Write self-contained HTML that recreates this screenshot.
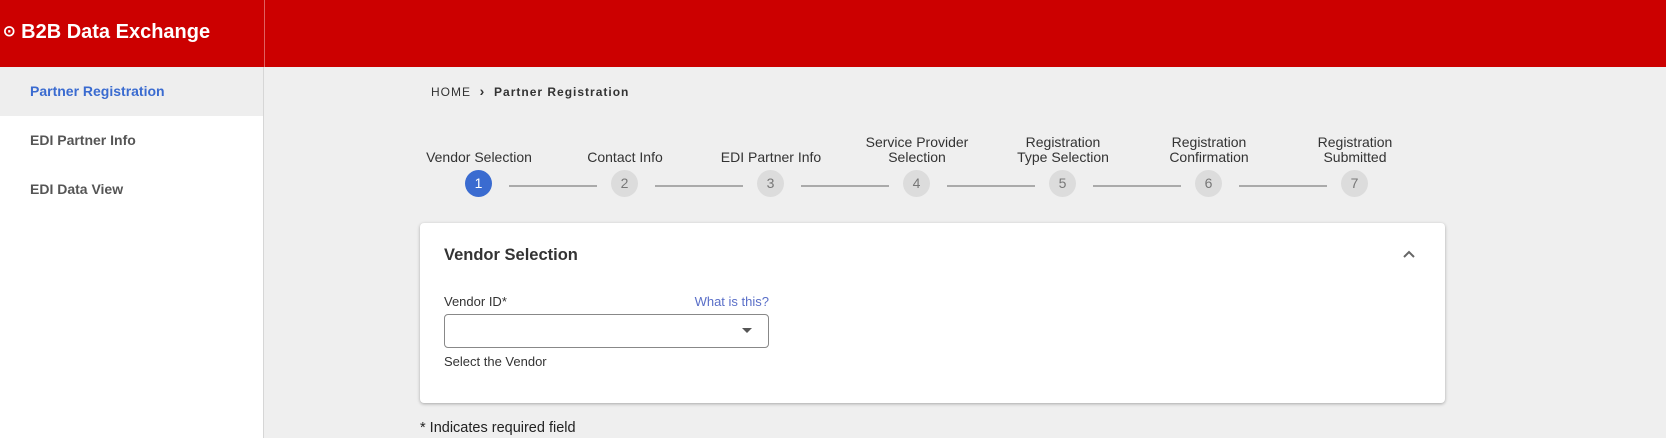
<!DOCTYPE html>
<html><head><meta charset="utf-8"><style>
*{margin:0;padding:0;box-sizing:border-box}
body{width:1666px;height:438px;overflow:hidden;background:#efefef;font-family:"Liberation Sans",Arial,sans-serif;position:relative}
.hdr{position:absolute;left:0;top:0;width:1666px;height:67px;background:#cc0000}
.hdr .sep{position:absolute;left:264px;top:0;width:1px;height:67px;background:#e06060}
.logo{position:absolute;left:3px;top:21px;color:#fff;font-weight:bold;font-size:20px;white-space:nowrap}
.side{position:absolute;left:0;top:67px;width:264px;height:371px;background:#fff;border-right:1px solid #d6d6d6}
.side .t{position:absolute;left:30px;font-size:14px;font-weight:bold;color:#555}
.act{position:absolute;left:0;top:0;width:263px;height:49px;background:#eeeeee}
.bc{position:absolute;left:431px;top:83px;font-size:12px;letter-spacing:1px;color:#333}
.lbl{position:absolute;width:160px;text-align:center;font-size:14px;line-height:15px;color:#333}
.c{position:absolute;width:27px;height:27px;border-radius:50%;background:#dcdcdc;color:#777;font-size:14px;text-align:center;line-height:27px}
.ln{position:absolute;height:2px;background:#aaa;top:185px;width:88px}
.card{position:absolute;left:420px;top:223px;width:1025px;height:180px;background:#fff;border-radius:4px;box-shadow:0 1px 3px rgba(0,0,0,.3)}
</style></head><body>
<div class="hdr"><div class="sep"></div><div class="logo"><span style="font-size:15px;position:relative;top:-2px">⊙</span> B2B Data Exchange</div></div>
<div class="side"><div class="act"></div>
<div class="t" style="top:16px;color:#3a6bd0">Partner Registration</div>
<div class="t" style="top:65px">EDI Partner Info</div>
<div class="t" style="top:114px">EDI Data View</div></div>
<div class="bc">HOME &nbsp;<b style="font-size:14px">›</b>&nbsp; <b>Partner Registration</b></div>

<div class="lbl" style="left:399px;top:150px">Vendor Selection</div>
<div class="lbl" style="left:545px;top:150px">Contact Info</div>
<div class="lbl" style="left:691px;top:150px">EDI Partner Info</div>
<div class="lbl" style="left:837px;top:135px">Service Provider<br>Selection</div>
<div class="lbl" style="left:983px;top:135px">Registration<br>Type Selection</div>
<div class="lbl" style="left:1129px;top:135px">Registration<br>Confirmation</div>
<div class="lbl" style="left:1275px;top:135px">Registration<br>Submitted</div>
<div class="c" style="left:465px;top:170px;background:#3a6bd0;color:#fff">1</div>
<div class="c" style="left:611px;top:170px">2</div>
<div class="c" style="left:757px;top:170px">3</div>
<div class="c" style="left:903px;top:170px">4</div>
<div class="c" style="left:1049px;top:170px">5</div>
<div class="c" style="left:1195px;top:170px">6</div>
<div class="c" style="left:1341px;top:170px">7</div>
<div class="ln" style="left:509px"></div><div class="ln" style="left:655px"></div><div class="ln" style="left:801px"></div>
<div class="ln" style="left:947px"></div><div class="ln" style="left:1093px"></div><div class="ln" style="left:1239px"></div>

<div class="card">
<div style="position:absolute;left:24px;top:23px;font-size:16.5px;font-weight:bold;color:#333">Vendor Selection</div>
<svg style="position:absolute;left:982px;top:26px" width="14" height="10"><path d="M2 8 L7 3 L12 8" stroke="#666" stroke-width="2" fill="none"/></svg>
<div style="position:absolute;left:24px;top:71px;font-size:13px;color:#333">Vendor ID*</div>
<div style="position:absolute;right:676px;top:71px;font-size:13px;color:#5a6fc8">What is this?</div>
<div style="position:absolute;left:24px;top:91px;width:325px;height:34px;border:1.5px solid #888;border-radius:4px"></div>
<svg style="position:absolute;left:322px;top:105px" width="12" height="7"><path d="M0 0 H10 L5 5Z" fill="#555"/></svg>
<div style="position:absolute;left:24px;top:131px;font-size:13px;color:#333">Select the Vendor</div>
</div>
<div style="position:absolute;left:420px;top:420px;font-size:14.5px;color:#222">* Indicates required field</div>
</body></html>
